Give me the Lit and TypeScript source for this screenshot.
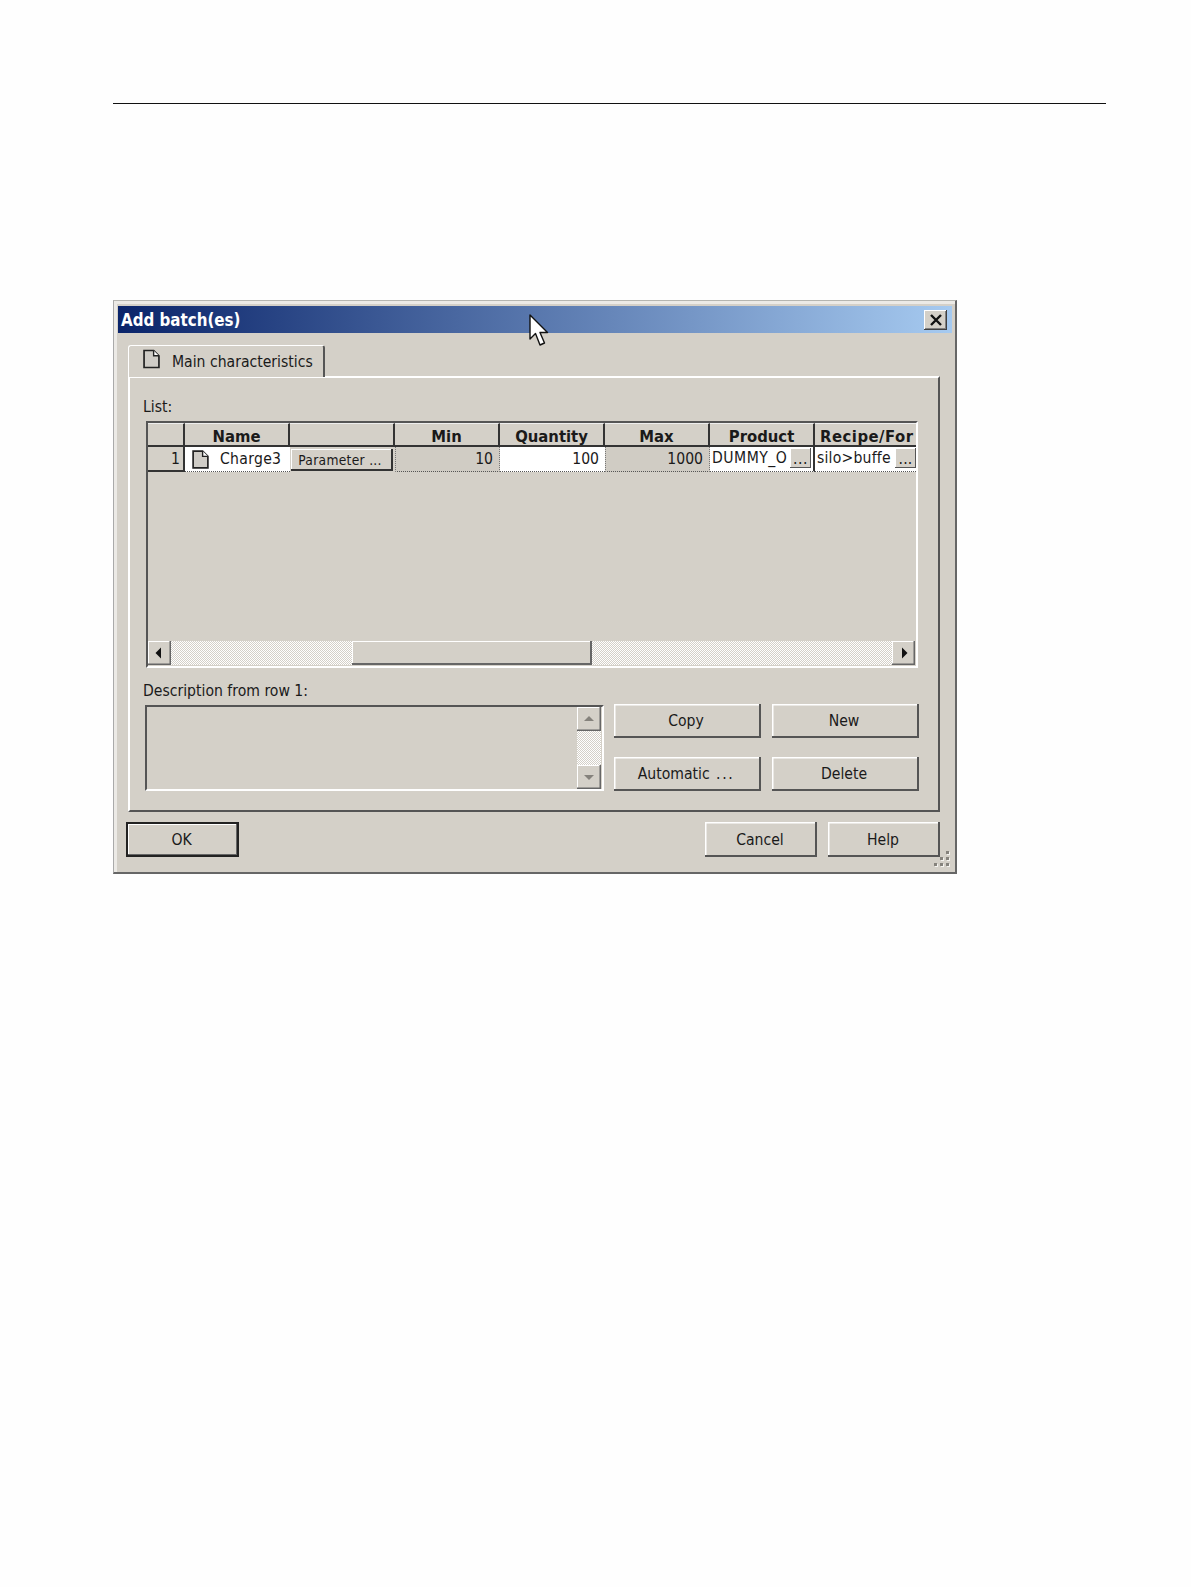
import { LitElement, html, css, svg } from "lit";
import { customElement } from "lit/decorators.js";

const doc = (w: number, h: number) => html`<svg class="doc" width=${w} height=${h} viewBox="0 0 16 18">
  <path d="M1 1H10L15 6V17H1Z" fill="#cfccc6" stroke="#222" stroke-width="1.6"/>
  <path d="M10 1V6H15" fill="#fff" stroke="#222" stroke-width="1.3"/>
</svg>`;

const tri = (d: string, fill: string) => html`<svg width="10" height="12" viewBox="0 0 10 12"><path d=${d} fill=${fill}/></svg>`;

@customElement("app-root")
export class AppRoot extends LitElement {
  static styles = css`
    :host { display: block; height: 1587px; background: #fefefe; font-family: "DejaVu Sans Condensed", "DejaVu Sans", sans-serif; font-size: 15.6px; color: #1a1a1a; overflow: hidden; }
    .rule { margin: 103px 85px 0 113px; height: 1px; background: #111; }
    .dialog { position: relative; box-sizing: border-box; width: 844px; height: 574px; margin: 196px 0 0 113px; padding: 5px 3px 0 4px; background: #d4d0c8; border-top: 1px solid #b5b5b0; border-left: 1px solid #aaa; border-right: 2px solid #666; border-bottom: 2px solid #666; box-shadow: inset 3px 3px 0 #eceae6; }
    .title { height: 27px; display: flex; align-items: center; justify-content: space-between; padding: 0 5px 0 3px; background: linear-gradient(90deg, #0a246a, #a6caf0); color: #fff; font-weight: 700; font-size: 16.8px; }
    .close { width: 23px; height: 20px; display: flex; align-items: center; justify-content: center; background: #d4d0c8; box-shadow: inset -1px -1px #404040, inset 1px 1px #fff, inset -2px -2px #808080; }
    .body { box-sizing: border-box; padding: 12px 0 0 8px; width: 822px; }
    .tab { box-sizing: border-box; width: 197px; height: 32px; margin-left: 2px; margin-bottom: -1px; position: relative; z-index: 1; display: flex; align-items: center; gap: 12px; padding: 0 0 0 14px; background: #d4d0c8; border-top: 1.5px solid #fff; border-left: 1.5px solid #fff; border-right: 2px solid #555; border-top-left-radius: 3px; border-top-right-radius: 3px; }
    .tab .doc { margin-top: -5px; }
    .panel { box-sizing: border-box; width: 812px; height: 436px; margin-left: 2px; padding: 20px 0 0 13px; border-top: 2px solid #fff; border-left: 2px solid #fff; border-right: 2px solid #555; border-bottom: 2px solid #555; }
    .label { height: 23px; line-height: 18px; }
    .grid { box-sizing: border-box; width: 772px; height: 247px; margin-left: 3px; display: flex; flex-direction: column; border-top: 2px solid #555; border-left: 2px solid #555; border-right: 2px solid #fff; border-bottom: 2px solid #fff; background: #d4d0c8; overflow: hidden; }
    .rows { flex: 1; display: grid; grid-template-columns: 37px 105px 105px 105px 105px 105px 105px 101px; grid-template-rows: 24px 25px; align-content: start; }
    .h { box-sizing: border-box; display: flex; align-items: center; justify-content: center; padding-top: 3px; font-weight: 700; font-size: 16.5px; border-right: 2px solid #333; border-bottom: 2px solid #333; border-top: 1px solid #eee; }
    .h.clip { justify-content: flex-start; padding-left: 5px; border-right: 0; white-space: nowrap; overflow: hidden; letter-spacing: 0.5px; }
    .c { box-sizing: border-box; display: flex; align-items: center; border-bottom: 1px dotted #555; white-space: nowrap; overflow: hidden; background: #fff; }
    .num { justify-content: flex-end; padding-right: 6px; }
    .gray { background: #d0ccc4; border-left: 1px dotted #777; border-right: 1px dotted #777; }
    .head { background: #d4d0c8; border-right: 2px solid #333; border-bottom: 2px solid #333; padding-right: 3px; justify-content: flex-end; }
    .name { padding-left: 7px; gap: 11px; letter-spacing: 0.3px; }
    .pbtn { padding: 0; background: #d4d0c8; border-bottom: 0; }
    .param { box-sizing: border-box; flex: 1; height: 22px; margin: 0 2px 0 1px; padding-right: 4px; display: flex; align-items: center; justify-content: center; font-size: 13.7px; letter-spacing: 0.3px; background: #d4d0c8; box-shadow: inset -2px -2px #333, inset 1px 1px #fff; }
    .pick { justify-content: space-between; padding: 0 2px 2px 2px; border-right: 2px solid #333; letter-spacing: 0.5px; }
    .pick.last { border-right: 0; padding-right: 0; letter-spacing: 0.2px; }
    .dots { width: 21px; height: 20px; flex: none; display: flex; align-items: flex-end; justify-content: center; line-height: 17px; background: #d4d0c8; box-shadow: inset -1px -1px #555, inset 1px 1px #fff; }
    .hscroll { height: 24px; margin: 0 1px 1px 0; display: flex; }
    .track { background: conic-gradient(#fff 25%, #d4d0c8 0 50%, #fff 0 75%, #d4d0c8 0) 0 0 / 2px 2px; }
    .sbtn { flex: none; width: 23px; display: flex; align-items: center; justify-content: center; background: #d4d0c8; box-shadow: inset -1.5px -1.5px #666, inset 1px 1px #fff; }
    .lead { width: 181px; }
    .thumb { flex: none; width: 240px; background: #d4d0c8; box-shadow: inset -2px -2px #666, inset 1px 1px #fff; }
    .grow { flex: 1; }
    .desc-label { margin-top: 14px; height: 23px; line-height: 18px; }
    .lower { display: flex; gap: 10px; margin-left: 2px; }
    .memo { box-sizing: border-box; width: 459px; height: 86px; display: flex; justify-content: flex-end; padding-right: 1px; border-top: 2px solid #555; border-left: 2px solid #555; border-right: 2px solid #fff; border-bottom: 2px solid #fff; }
    .vscroll { width: 24px; display: flex; flex-direction: column; }
    .vscroll .sbtn { width: auto; height: 24px; }
    .actions { display: grid; grid-template-columns: 147px 147px; grid-auto-rows: 34px; gap: 19px 11px; margin-top: -1px; }
    .btn { box-sizing: border-box; display: flex; align-items: center; justify-content: center; background: #d4d0c8; box-shadow: inset -2px -2px #555, inset 1.5px 1.5px #fff; }
    .actions .btn { padding-right: 3px; }
    .ell { letter-spacing: 1.6px; margin-left: 2px; }
    .footer { display: flex; gap: 11px; margin-top: 10px; }
    .footer .btn { width: 112px; height: 35px; padding-right: 2px; }
    .footer .default { width: 113px; }
    .default { box-shadow: inset 0 0 0 2px #222, inset -3px -3px #666, inset 3px 3px #fff !important; }
    .grip { position: absolute; right: 5px; bottom: 5px; }
    .cursor { position: absolute; left: 415px; top: 13px; }
  `;

  render() {
    return html`
      <div class="rule"></div>
      <div class="dialog">
        <div class="title">
          <span>Add batch(es)</span>
          <div class="close"><svg width="14" height="12" viewBox="0 0 14 12"><path d="M2 1L12 11M12 1L2 11" stroke="#111" stroke-width="2.4"/></svg></div>
        </div>
        <div class="body">
          <div class="tab">${doc(17, 20)}<span>Main characteristics</span></div>
          <div class="panel">
            <div class="label">List:</div>
            <div class="grid">
              <div class="rows">
                <div class="h"></div><div class="h">Name</div><div class="h"></div><div class="h">Min</div>
                <div class="h">Quantity</div><div class="h">Max</div><div class="h">Product</div><div class="h clip">Recipe/For</div>
                <div class="c head">1</div>
                <div class="c name">${doc(17, 19)}<span>Charge3</span></div>
                <div class="c pbtn"><div class="param">Parameter ...</div></div>
                <div class="c num gray">10</div>
                <div class="c num">100</div>
                <div class="c num gray">1000</div>
                <div class="c pick"><span>DUMMY_O</span><div class="dots">...</div></div>
                <div class="c pick last"><span>silo&gt;buffe</span><div class="dots">...</div></div>
              </div>
              <div class="hscroll">
                <div class="sbtn">${tri("M6 0.5V11.5L0.5 6Z", "#111")}</div>
                <div class="track lead"></div>
                <div class="thumb"></div>
                <div class="track grow"></div>
                <div class="sbtn">${tri("M3 0.5V11.5L8.5 6Z", "#111")}</div>
              </div>
            </div>
            <div class="desc-label">Description from row 1:</div>
            <div class="lower">
              <div class="memo">
                <div class="vscroll">
                  <div class="sbtn"><svg width="12" height="8" viewBox="0 0 12 8"><path d="M6 1L11 6H1Z" fill="#85827c"/></svg></div>
                  <div class="track grow"></div>
                  <div class="sbtn"><svg width="12" height="8" viewBox="0 0 12 8"><path d="M6 7L11 2H1Z" fill="#85827c"/></svg></div>
                </div>
              </div>
              <div class="actions">
                <div class="btn">Copy</div><div class="btn">New</div>
                <div class="btn"><span>Automatic <span class="ell">...</span></span></div><div class="btn">Delete</div>
              </div>
            </div>
          </div>
          <div class="footer">
            <div class="btn default">OK</div>
            <div class="grow"></div>
            <div class="btn">Cancel</div>
            <div class="btn">Help</div>
          </div>
        </div>
        <svg class="grip" width="16" height="16" viewBox="0 0 16 16">
          ${[[12,0],[6,6],[12,6],[0,12],[6,12],[12,12]].map(([x,y]) => svg`<rect x=${x + 1} y=${y + 1} width="3" height="3" fill="#f4f3ef"/><rect x=${x} y=${y} width="3" height="3" fill="#85827c"/>`)}
        </svg>
        <svg class="cursor" width="20" height="34" viewBox="0 0 20 34">
          <path d="M1 1V25L6.5 19.5L11 31L15.5 29L11 18.5H18.5Z" fill="#fff" stroke="#111" stroke-width="1.4" stroke-linejoin="round"/>
        </svg>
      </div>
    `;
  }
}
